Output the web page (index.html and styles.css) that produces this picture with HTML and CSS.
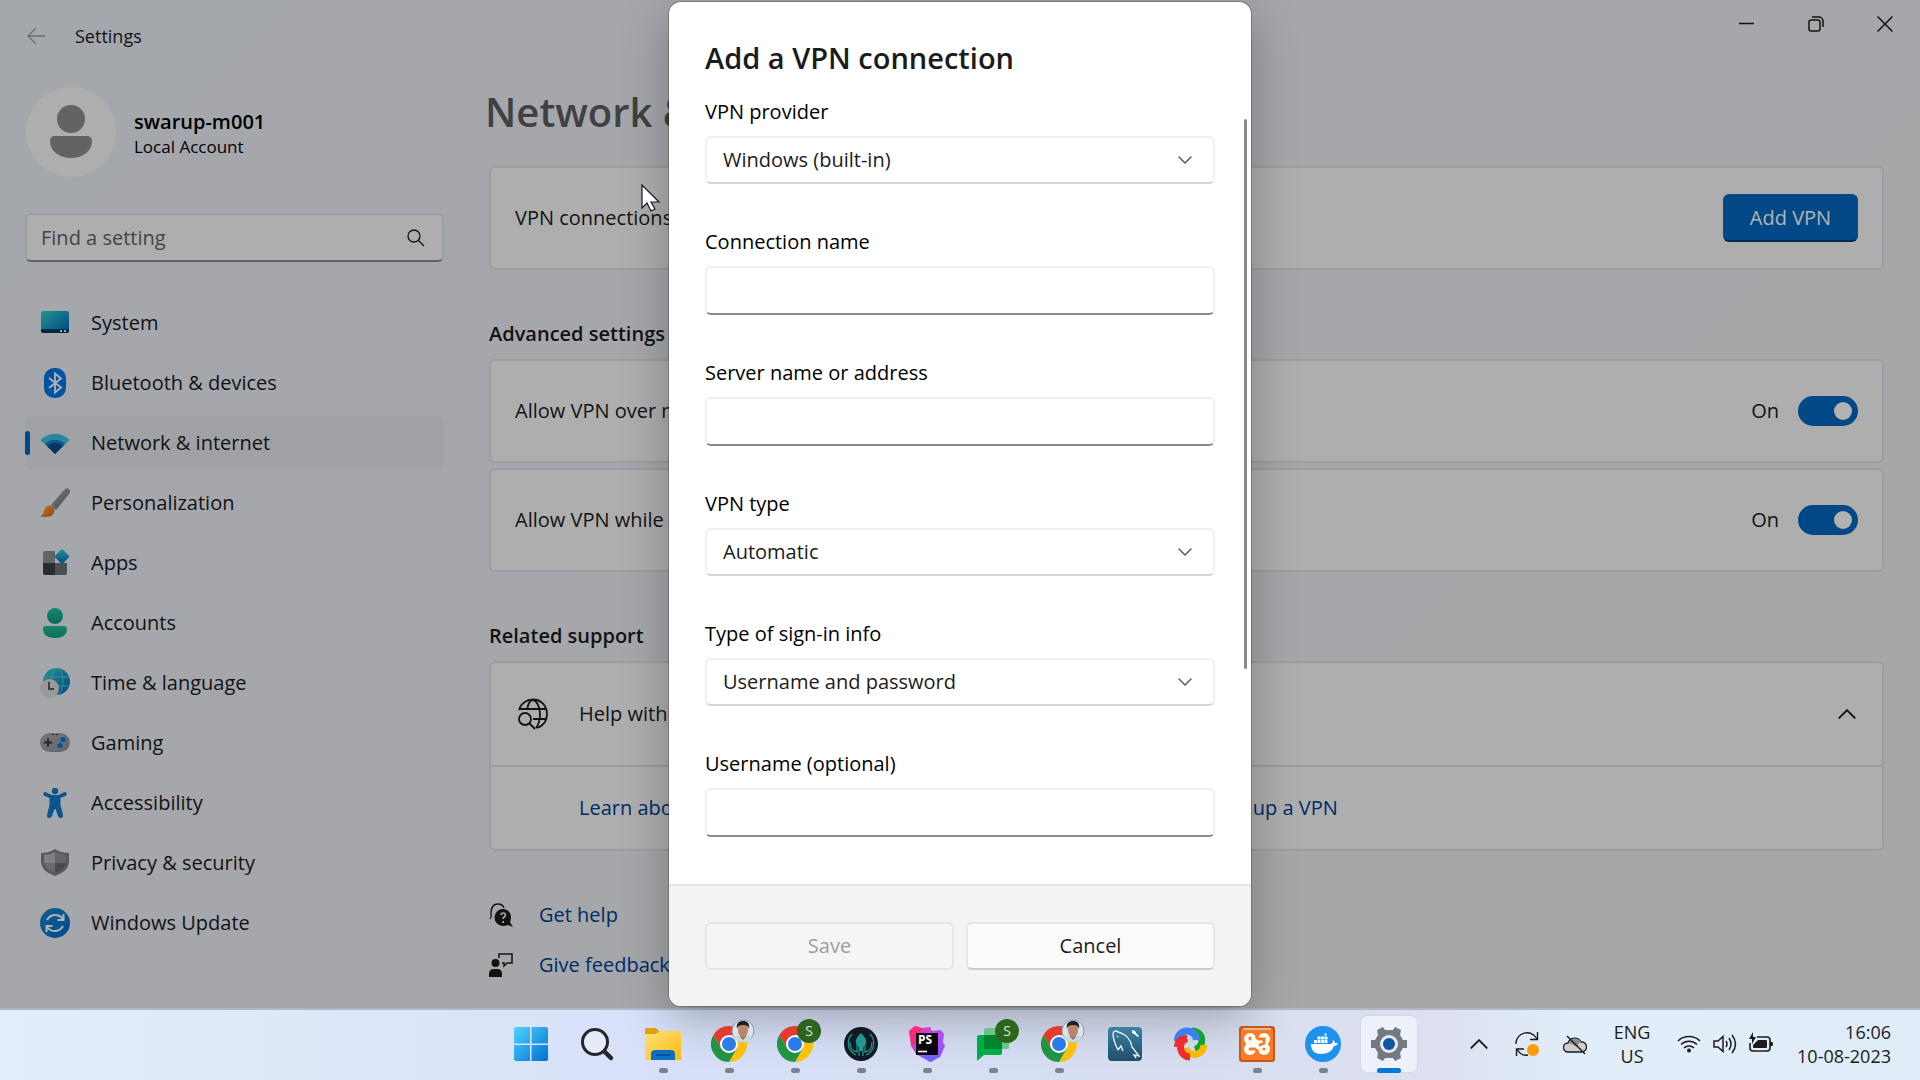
FILE: index.html
```html
<!DOCTYPE html>
<html lang="en">
<head>
  <meta charset="UTF-8" />
  <meta name="viewport" content="width=device-width, initial-scale=1.0"/>
  <title>Settings</title>
  <link rel="stylesheet" href="styles.css">
</head>
<body>
  <!-- Shared gradients and repeated icons -->
  <svg class="defs" width="0" height="0" aria-hidden="true">
    <defs>
      <linearGradient id="gTeal" x1="0" y1="0" x2="1" y2="1"><stop offset="0" stop-color="#35d3d0"/><stop offset="1" stop-color="#0067bd"/></linearGradient>
      <linearGradient id="gGreen" x1="0" y1="0" x2="0" y2="1"><stop offset="0" stop-color="#25c2a0"/><stop offset="1" stop-color="#0f9a7c"/></linearGradient>
      <linearGradient id="gGrey" x1="0" y1="0" x2="1" y2="1"><stop offset="0" stop-color="#b4b8bd"/><stop offset="1" stop-color="#5e646b"/></linearGradient>
      <linearGradient id="gPad" x1="0" y1="0" x2="1" y2="1"><stop offset="0" stop-color="#a6abb0"/><stop offset="1" stop-color="#8d9298"/></linearGradient>
      <linearGradient id="gBlue" x1="0" y1="0" x2="1" y2="1"><stop offset="0" stop-color="#1a8ad0"/><stop offset="1" stop-color="#006acb"/></linearGradient>
      <linearGradient id="gStart" x1="0" y1="0" x2="1" y2="1"><stop offset="0" stop-color="#4fd4ff"/><stop offset="1" stop-color="#006fd0"/></linearGradient>
      <linearGradient id="gFolder" x1="0" y1="0" x2="1" y2="1"><stop offset="0" stop-color="#ffe27a"/><stop offset="1" stop-color="#ffb90f"/></linearGradient>
      <linearGradient id="gOrange" x1="0" y1="0" x2="1" y2="1"><stop offset="0" stop-color="#ffc13b"/><stop offset="1" stop-color="#e0561b"/></linearGradient>
      <linearGradient id="gSql" x1="0" y1="0" x2="0" y2="1"><stop offset="0" stop-color="#3c82a5"/><stop offset="1" stop-color="#1f4d69"/></linearGradient>
      <linearGradient id="gStorm" x1="0" y1="0" x2="1" y2="1"><stop offset="0" stop-color="#ff2d90"/><stop offset="0.5" stop-color="#b74af7"/><stop offset="1" stop-color="#7b5cff"/></linearGradient>
    </defs>
    <symbol id="chrome" viewBox="0 0 36 36">
      <path d="M10.200 22.500 2.400 9a18 18 0 0 1 31.200 0H18z" fill="#e33b2e"/>
      <path d="M18 9h15.600A18 18 0 0 1 18 36l7.800-13.500z" fill="#fdc00f"/>
      <path d="M25.800 22.500 18 36A18 18 0 0 1 2.400 9l7.800 13.500z" fill="#229342"/>
      <circle cx="18" cy="18" r="9" fill="#fff"/>
      <circle cx="18" cy="18" r="7" fill="#2b7bec"/>
    </symbol>
    <symbol id="face" viewBox="0 0 24 24">
      <circle cx="12" cy="12" r="11" fill="#dbe3ec" stroke="#8f99a6" stroke-width="1"/>
      <path d="M4 20c1-4 4-5 8-5s7 1 8 5a11 11 0 0 1-16 0z" fill="#c4dbe4"/>
      <path d="M9 14h6v4l-3 3-3-3z" fill="#a8745c"/>
      <ellipse cx="12" cy="11" rx="5" ry="7" fill="#b9856b"/>
      <path d="M6 10C5 4 8 2 12 2s7 2 6 8c-1-3-2-4-6-4s-5 1-6 4z" fill="#1e1d20"/>
    </symbol>
    <symbol id="chevron" viewBox="0 0 14 14">
      <path d="M1 4l6 6 6-6" fill="none" stroke="currentColor" stroke-width="1.500" stroke-linecap="round" stroke-linejoin="round"/>
    </symbol>
  </svg>

  <div class="desktop">
    <div class="window">
      <!-- Title bar -->
      <header class="titlebar">
        <button class="back" aria-label="Back"><svg width="20" height="18" viewBox="0 0 20 18"><path d="M10 1 2 9l8 8M2 9h17" fill="none" stroke="currentColor" stroke-width="1.300"/></svg></button>
        <span class="app-name">Settings</span>
        <div class="window-buttons">
          <button aria-label="Minimize"><svg width="15" height="15" viewBox="0 0 15 15"><path d="M0 7.500h15" stroke="currentColor" stroke-width="1.500"/></svg></button>
          <button aria-label="Restore"><svg width="16" height="16" viewBox="0 0 16 16" fill="none" stroke="currentColor" stroke-width="1.500"><rect x="1" y="4" width="11" height="11" rx="2"/><path d="M4 1h7a4 4 0 0 1 4 4v6"/></svg></button>
          <button aria-label="Close"><svg width="16" height="16" viewBox="0 0 16 16"><path d="M.5.5l15 15M15.500.5l-15 15" stroke="currentColor" stroke-width="1.500"/></svg></button>
        </div>
      </header>

      <div class="columns">
        <!-- Sidebar -->
        <aside class="sidebar">
          <div class="account">
            <div class="avatar">
              <svg width="90" height="90" viewBox="0 0 90 90" fill="#8e8e8e"><circle cx="45" cy="32" r="14"/><path d="M29 49h32q5 0 5 5c0 10-9 17-21 17S24 64 24 54q0-5 5-5z"/></svg>
            </div>
            <div class="account-text">
              <div class="account-name">swarup-m001</div>
              <div class="account-type">Local Account</div>
            </div>
          </div>

          <div class="search">
            <input type="search" placeholder="Find a setting" aria-label="Find a setting">
            <svg width="18" height="18" viewBox="0 0 18 18" fill="none" stroke="currentColor" stroke-width="1.300"><circle cx="7" cy="7" r="6"/><path d="M11.500 11.500 17 17"/></svg>
          </div>

          <nav class="nav">
            <a href="#system">
              <svg width="30" height="30" viewBox="0 0 30 30"><rect x="1" y="3" width="28" height="22" rx="2" fill="url(#gTeal)"/><path d="M1 21h28v2q0 2-2 2H3q-2 0-2-2z" fill="#0b3c5c"/><path d="M20 22h2v2h-2zM24 22h2v2h-2z" fill="#cfe"/></svg>
              System
            </a>
            <a href="#bluetooth">
              <svg width="30" height="30" viewBox="0 0 30 30"><rect x="4" y="0" width="22" height="30" rx="10" fill="#0078e6"/><path d="M9 10l12 9.500-6 5v-19l6 5L9 20" fill="none" stroke="#fff" stroke-width="1.800"/></svg>
              Bluetooth &amp; devices
            </a>
            <a href="#network" class="selected">
              <svg width="30" height="30" viewBox="0 0 30 30"><path d="M.5 12a20 20 0 0 1 29 0L15 26z" fill="#3cc3e0"/><path d="M5 16a14 14 0 0 1 20 0L15 26z" fill="#1683ce"/><path d="M7 18q8-7 16 0l-8 8z" fill="#0c4d93"/></svg>
              Network &amp; internet
            </a>
            <a href="#personalization">
              <svg width="30" height="30" viewBox="0 0 30 30"><path d="M11 17 24 2q3-3 5-1t0 5L16 22z" fill="url(#gGrey)"/><path d="M0 28c4-1 3-4 5-8 2-3 6-4 8-1 3 3 1 7-2 9-3 1-8 2-11 0z" fill="url(#gOrange)"/></svg>
              Personalization
            </a>
            <a href="#apps">
              <svg width="30" height="30" viewBox="0 0 30 30"><path d="M3 5q0-2 2-2h10v12H3z" fill="#8b9197"/><path d="M3 15h12v12H5q-2 0-2-2z" fill="#3b4045"/><path d="M15 15h12v10q0 2-2 2H15z" fill="#6b7178"/><rect x="16.500" y="3" width="11" height="11" rx="1.500" transform="rotate(45 22 8.500)" fill="url(#gTeal)"/></svg>
              Apps
            </a>
            <a href="#accounts">
              <svg width="30" height="30" viewBox="0 0 30 30" fill="url(#gGreen)"><circle cx="15" cy="8" r="8"/><path d="M6 18h18q3 0 3 3c0 6-5 9-12 9S3 27 3 21q0-3 3-3z"/></svg>
              Accounts
            </a>
            <a href="#time">
              <svg width="30" height="30" viewBox="0 0 30 30"><circle cx="16.500" cy="13.500" r="13.500" fill="url(#gTeal)"/><g fill="none" stroke="#4fd0de" stroke-width="1"><ellipse cx="17" cy="13.500" rx="6" ry="13"/><path d="M4 9h25M8 18h21"/></g><circle cx="9.500" cy="20.500" r="9.500" fill="#dcdcdc"/><path d="M9 14v7h5" fill="none" stroke="#55595e" stroke-width="2"/></svg>
              Time &amp; language
            </a>
            <a href="#gaming">
              <svg width="30" height="30" viewBox="0 0 30 30"><rect x="0" y="5" width="30" height="19" rx="9.500" fill="url(#gPad)"/><path d="M4 14.500h8M8 10.500v8" stroke="#33373b" stroke-width="2"/><circle cx="23" cy="11.500" r="2.500" fill="#0078d9"/><circle cx="20" cy="17.500" r="2.500" fill="#0078d9"/><path d="M12 6.500h2M16 6.500h2" stroke="#33373b"/></svg>
              Gaming
            </a>
            <a href="#accessibility">
              <svg width="30" height="30" viewBox="0 0 30 30" fill="#0f7ac8"><circle cx="15" cy="3" r="3.200"/><path d="M3.500 5q1-1.500 3-.5l5 2.500h7l5-2.500q2-1 3 .5t-1 3l-5 2v7l2.500 10q.3 3-2 3t-3-2L15.500 21h-1L12 28q-.7 2-3 2t-2-3l2.500-10v-7l-5-2q-2-1.500-1-3z"/></svg>
              Accessibility
            </a>
            <a href="#privacy">
              <svg width="30" height="30" viewBox="0 0 30 30"><path d="M15 1q6 4 14 4v8c0 8-6 12-14 15C7 25 1 21 1 13V5q8 0 14-4z" fill="#7d8186"/><path d="M15 4v11H4V7q6 0 11-3z" fill="#b5b8bb"/><path d="M15 4v11h11V7q-6 0-11-3z" fill="#8f9397"/><path d="M4 15h11v10Q5 21 4 15z" fill="#95999d"/><path d="M26 15H15v10q10-4 11-10z" fill="#666b70"/></svg>
              Privacy &amp; security
            </a>
            <a href="#update">
              <svg width="30" height="30" viewBox="0 0 30 30"><circle cx="15" cy="15" r="15" fill="url(#gBlue)"/><path d="M7 12q3-5 8-5 5 0 8 4M23 18q-3 5-8 5-5 0-8-4" fill="none" stroke="#fff" stroke-width="2"/><path d="M23.500 6v6h-6M6.500 24v-6h6" fill="none" stroke="#fff" stroke-width="2"/></svg>
              Windows Update
            </a>
          </nav>
        </aside>

        <!-- Page content -->
        <main class="content">
          <h1>Network &amp; internet &rsaquo; VPN</h1>

          <div class="card row">
            <span>VPN connections</span>
            <button class="primary">Add VPN</button>
          </div>

          <h2>Advanced settings</h2>
          <div class="cards">
            <div class="card row">
              <label for="metered">Allow VPN over metered networks</label>
              <span class="state">On</span>
              <input type="checkbox" class="switch" id="metered" checked>
            </div>
            <div class="card row">
              <label for="roaming">Allow VPN while roaming</label>
              <span class="state">On</span>
              <input type="checkbox" class="switch" id="roaming" checked>
            </div>
          </div>

          <h2>Related support</h2>
          <div class="card">
            <div class="row help">
              <svg width="32" height="32" viewBox="0 0 32 32" fill="none" stroke="currentColor" stroke-width="1.800"><path d="M2 12C4 5 10 1.500 16 1.500c8 0 14 6 14 14.500 0 7-4 12-10 14"/><path d="M10 12c1-6 3-10 6-10s7 6 7 14c0 6-1 10-4 14M3 11h26M16 21h13"/><circle cx="8" cy="21" r="6"/><path d="M12 25l6 6"/></svg>
              <span>Help with VPN</span>
              <button class="expand" aria-label="Collapse"><svg class="up" width="18" height="18"><use href="#chevron"/></svg></button>
            </div>
            <div class="links">
              <a href="#learn">Learn about VPN</a>
              <a href="#setup">Setting up a VPN</a>
            </div>
          </div>

          <div class="feedback">
            <a href="#help">
              <svg width="24" height="24" viewBox="0 0 24 24"><path d="M1 16c2-2 1-3 1-6C2 4 5 1 9 1c3 0 5 1 6 4" fill="none" stroke="#1b1b1b" stroke-width="1.300"/><path d="M14 6a8 8 0 0 1 8 8q0 3-1 5l3 5-5-2q-2 1-5 1a8 8 0 0 1 0-17z" fill="#1b1b1b"/><path d="M12 12q0-2 2.200-2t2.200 2q0 1.500-2.200 3v1M14.200 18v2" fill="none" stroke="#f0f0f0" stroke-width="1.600"/></svg>
              Get help
            </a>
            <a href="#feedback">
              <svg width="24" height="24" viewBox="0 0 24 24"><circle cx="6.500" cy="10" r="4" fill="#1b1b1b"/><path d="M0 24v-3q0-5 5-5h3q5 0 5 5v3z" fill="#1b1b1b"/><path d="M10 5V1h13v9h-5l-3 3v-3h-2" fill="none" stroke="#1b1b1b" stroke-width="1.500"/></svg>
              Give feedback
            </a>
          </div>
        </main>
      </div>

      <!-- VPN dialog -->
      <div class="overlay">
        <form class="dialog" role="dialog" aria-labelledby="dialogTitle">
          <div class="dialog-body">
            <h2 class="dialog-title" id="dialogTitle">Add a VPN connection</h2>
            <div class="fields">
              <div class="field">
                <label for="provider">VPN provider</label>
                <div class="select">
                  <select id="provider"><option>Windows (built-in)</option></select>
                  <svg width="14" height="14"><use href="#chevron"/></svg>
                </div>
              </div>
              <div class="field">
                <label for="connection">Connection name</label>
                <input type="text" id="connection">
              </div>
              <div class="field">
                <label for="server">Server name or address</label>
                <input type="text" id="server">
              </div>
              <div class="field">
                <label for="type">VPN type</label>
                <div class="select">
                  <select id="type"><option>Automatic</option></select>
                  <svg width="14" height="14"><use href="#chevron"/></svg>
                </div>
              </div>
              <div class="field">
                <label for="signin">Type of sign-in info</label>
                <div class="select">
                  <select id="signin"><option>Username and password</option></select>
                  <svg width="14" height="14"><use href="#chevron"/></svg>
                </div>
              </div>
              <div class="field">
                <label for="username">Username (optional)</label>
                <input type="text" id="username">
              </div>
            </div>
            <div class="scroll-thumb"></div>
          </div>
          <div class="dialog-footer">
            <button type="submit" disabled>Save</button>
            <button type="button">Cancel</button>
          </div>
        </form>
      </div>
    </div>

    <!-- Taskbar -->
    <footer class="taskbar">
      <div class="apps">
        <button class="app" aria-label="Start">
          <svg width="36" height="36" viewBox="0 0 36 36" fill="url(#gStart)"><path d="M1 3q0-2 2-2h14v16.500H1zM18.500 1H33q2 0 2 2v14.500H18.500zM1 19h16v16H3q-2 0-2-2zM18.500 19H35v14q0 2-2 2H18.500z"/></svg>
        </button>
        <button class="app" aria-label="Search">
          <svg width="36" height="36" viewBox="0 0 36 36" fill="none" stroke="#26262a"><circle cx="16" cy="16" r="12.500" fill="#e6ebf8" stroke-width="3"/><path d="M25.500 25.500 32 32" stroke-width="4.500" stroke-linecap="round"/></svg>
        </button>
        <button class="app running" aria-label="File Explorer">
          <svg width="36" height="36" viewBox="0 0 36 36"><path d="M0 4q0-2 2-2h9l4 4v4H0z" fill="#e0a008"/><path d="M0 8h11l4-3h19q2 0 2 2v27H0z" fill="url(#gFolder)"/><path d="M6 34V28q0-4 4-4h16q4 0 4 4v6z" fill="#0c6fc0"/><path d="M11 29h14" stroke="#084a86" stroke-width="1.500"/></svg>
        </button>
        <button class="app running" aria-label="Chrome">
          <svg width="36" height="36"><use href="#chrome"/></svg>
          <svg class="badge" width="24" height="24"><use href="#face"/></svg>
        </button>
        <button class="app running" aria-label="Chrome">
          <svg width="36" height="36"><use href="#chrome"/></svg>
          <span class="badge letter">S</span>
        </button>
        <button class="app running" aria-label="GitKraken">
          <svg width="36" height="36" viewBox="0 0 36 36"><circle cx="18" cy="18" r="17" fill="#141824"/><g fill="none" stroke="#1a9a90" stroke-width="1.200"><path d="M9 8a13 13 0 0 0 4 21M27 8a13 13 0 0 1-4 21M7 16q0 9 7 10v-8M29 16q0 9-7 10v-8M16 24v6M20 24v6"/></g><path d="M18 7c4 4 6 7 5 10-1 3-3 2-3 8h-4c0-6-2-5-3-8-1-3 1-6 5-10z" fill="#1a9a90"/></svg>
        </button>
        <button class="app running" aria-label="PhpStorm">
          <svg width="36" height="36" viewBox="0 0 36 36"><path d="M0 5 6 0l7 2 8-1 2 4 9-1 3 4-1 8 2 4-5 11-10 5-14-8-5-8z" fill="url(#gStorm)"/><path d="M0 5 6 0l7 2-5 14-5 5z" fill="#ff2a78"/><path d="M22 30h9l-9 6-11-7z" fill="#6d63ff"/><rect x="7" y="7" width="22" height="22" fill="#0b060e"/><text x="9" y="18" class="logo-text">PS</text><path d="M9 25.500h9" stroke="#fff" stroke-width="1.600"/></svg>
        </button>
        <button class="app running" aria-label="Chat">
          <svg width="36" height="36" viewBox="0 0 36 36"><rect x="9" y="2" width="25" height="21" rx="2" fill="#6bc58a"/><path d="M2 11q0-2 2-2h23v18q0 2-2 2H9l-7 6z" fill="#00ac47"/><path d="M9 9h18v14H11q-2 0-2-2z" fill="#00832d"/></svg>
          <span class="badge letter">S</span>
        </button>
        <button class="app running" aria-label="Chrome">
          <svg width="36" height="36"><use href="#chrome"/></svg>
          <svg class="badge" width="24" height="24"><use href="#face"/></svg>
        </button>
        <button class="app" aria-label="MySQL Workbench">
          <svg width="36" height="36" viewBox="0 0 36 36"><rect x="1" y="1" width="34" height="34" rx="4" fill="url(#gSql)"/><path d="M11 24C8 18 6 12 6 8c0-3 3-4 5-2 8 2 13 8 14 15l7 9-5-1 2 3M11 24l3-4 2 5M10 10l1 1" fill="none" stroke="#e6eff4" stroke-width="1.400"/><path d="M25 4l3 1 1 2 3 3-1 1-4-3-2-1z" fill="#fff"/></svg>
        </button>
        <button class="app" aria-label="ShareX">
          <svg width="36" height="36" viewBox="0 0 36 36" fill="none" stroke-width="7"><path d="M19 4.900A9.500 9.500 0 0 1 22 23.500" stroke="#12a52b"/><path d="M31 19A9.500 9.500 0 0 1 12.500 22" stroke="#fbb705"/><path d="M17 31A9.500 9.500 0 0 1 14 12.500" stroke="#ef2b2b"/><path d="M4.500 15A9.500 9.500 0 0 1 23.500 14" stroke="#3b7ff0"/><path d="M4.500 21Q5 13 14 12.500" stroke="#ef2b2b"/></svg>
        </button>
        <button class="app running" aria-label="XAMPP">
          <svg width="36" height="36" viewBox="0 0 36 36"><rect width="36" height="36" rx="3" fill="#c25a1b"/><rect x="2" y="3" width="32" height="31" rx="2" fill="#fb7a24"/><path d="M4 2h28v2H4z" fill="#f2b48c"/><g fill="#fff"><circle cx="11" cy="13" r="6"/><circle cx="25" cy="13" r="6"/><circle cx="11" cy="23" r="6"/><circle cx="25" cy="23" r="6"/><rect x="8" y="13" width="20" height="10"/></g><g fill="none" stroke="#fb7a24" stroke-width="3" stroke-linecap="round"><path d="M11 12v1M11 23h5M20 13h5v4l-4 2M25 23v0M18 8v4M18 25v4"/></g></svg>
        </button>
        <button class="app running" aria-label="Docker">
          <svg width="36" height="36" viewBox="0 0 36 36"><circle cx="18" cy="18" r="18" fill="#1d91ec"/><path d="M6 18h20q2-1 2-4 2 1 2 3h3q-1 3-4 3-3 8-13 8C9 28 6 24 6 18z" fill="#fff"/><path d="M9 14h3v3H9zM12.500 14h3v3h-3zM16 14h3v3h-3zM19.500 14h3v3h-3zM12.500 10.500h3v3h-3zM16 10.500h3v3h-3zM19.500 10.500h3v3h-3zM19.500 7.500h2v2h-2z" fill="#fff"/></svg>
        </button>
        <button class="app running active" aria-label="Settings">
          <svg width="36" height="36" viewBox="0 0 36 36"><path d="M12 1l2 3h8l2-3 6 3-1 5 3 5h4v8h-4l-3 5 1 5-6 3-2-3h-8l-2 3-6-3 1-5-3-5H0v-8h4l3-5-1-5z" fill="#727b84"/><circle cx="18" cy="18" r="9" fill="#e7eaee"/><circle cx="18" cy="18" r="6" fill="#0c57a4"/></svg>
        </button>
      </div>

      <div class="tray">
        <button aria-label="Show hidden icons"><svg class="up" width="18" height="18"><use href="#chevron"/></svg></button>
        <button aria-label="Update status">
          <svg width="24" height="24" viewBox="0 0 24 24" fill="none" stroke="#1b1b1b" stroke-width="1.400"><path d="M1 12a11 10.500 0 0 1 21-5M22.500 0v7.500H15M13 23C8 24 4 21 2 17M1.500 24v-7H9"/><circle cx="18" cy="18" r="6" fill="#ff9a0a" stroke="none"/></svg>
        </button>
        <button aria-label="OneDrive">
          <svg width="24" height="24" viewBox="0 0 24 24"><path d="M5 20a4.500 4.500 0 0 1 0-9 7 7 0 0 1 13-1 5 5 0 0 1 1 10z" fill="#cfcfd2" stroke="#1b1b1b" stroke-width="1.300"/><path d="M6 11a6.500 6.500 0 0 1 12-1q-3 1-4 5z" fill="#8d8d91"/><path d="M4 4l18 18" stroke="#1b1b1b" stroke-width="1.500"/></svg>
        </button>
        <button class="language"><span>ENG</span><span>US</span></button>
        <button class="status" aria-label="Network, volume and battery">
          <svg width="24" height="24" viewBox="0 0 24 24" fill="none" stroke="#1b1b1b" stroke-width="1.500"><path d="M1 9a16 16 0 0 1 22 0M4 12.500a11.500 11.500 0 0 1 16 0M7 16a7 7 0 0 1 10 0"/><circle cx="12" cy="18.500" r="2" fill="#1b1b1b" stroke="none"/></svg>
          <svg width="24" height="24" viewBox="0 0 24 24" fill="none" stroke="#1b1b1b" stroke-width="1.500"><path d="M1 9h4l5-4.500v15L5 15H1zM13 9q2 3 0 6M16 6q4 6 0 12M19 3q7 9 0 18"/></svg>
          <svg width="24" height="24" viewBox="0 0 24 24"><path d="M8 5h10q3 0 3 3v8q0 3-3 3H4q-3 0-3-3v-5" fill="none" stroke="#1b1b1b" stroke-width="1.600"/><path d="M9 8h8q1 0 1 1v6q0 1-1 1H5q-1 0-1-1v-2z" fill="#1b1b1b"/><path d="M21 10h2q1 0 1 2t-1 2h-2zM4 0v5h3L3 12V7H0z" fill="#1b1b1b"/></svg>
        </button>
        <button class="clock"><span>16:06</span><span>10-08-2023</span></button>
      </div>
    </footer>

    <svg class="cursor" width="20" height="28" viewBox="0 0 20 28"><path d="M1 1v23l5-5 4 8 4-2-4-7h8z" fill="#fff" stroke="#15152a" stroke-width="1.200"/></svg>
  </div>
</body>
</html>
```

FILE: styles.css
```css
* {
  box-sizing: border-box;
}
body {
  margin: 0;
  font-family: "Open Sans", "Noto Sans", sans-serif;
  font-size: 20px;
  line-height: 28px;
  color: #1b1b1b;
}
button,
input,
select {
  font: inherit;
  color: inherit;
}
button {
  padding: 0;
  border: none;
  background: none;
}
svg {
  display: block;
  flex: none;
}
a {
  text-decoration: none;
}
.defs {
  position: absolute;
}
.desktop {
  display: flex;
  flex-direction: column;
  min-height: 100vh;
}
.window {
  position: relative;
  flex: 1;
  background: linear-gradient(135deg, #ebf0f7, #edf0f5 50%, #efeff2);
}

/* title bar */
.titlebar {
  display: flex;
  align-items: center;
  height: 72px;
  padding: 0 1px 0 26px;
}
.back {
  color: #9a9da1;
}
.app-name {
  margin-left: 29px;
  font-size: 18px;
}
.window-buttons {
  display: flex;
  align-self: flex-start;
  margin-left: auto;
}
.window-buttons button {
  display: flex;
  align-items: center;
  justify-content: center;
  width: 69px;
  height: 47px;
}

.columns {
  display: flex;
  padding: 12px 36px 0 25px;
}

/* sidebar */
.sidebar {
  flex: none;
  width: 419px;
  margin-right: 41px;
}
.account {
  display: flex;
  align-items: center;
  gap: 18px;
  padding: 3px 1px 0;
  color: #000;
}
.avatar {
  border-radius: 50%;
  background: #fafafa;
}
.account-text {
  padding-top: 4px;
}
.account-name {
  font-weight: 600;
  line-height: 26px;
}
.account-type {
  font-size: 17px;
  line-height: 24px;
}
.search {
  display: flex;
  align-items: center;
  height: 49px;
  margin: 36px 0 34px;
  padding: 0 17px 0 14px;
  border: 2px solid #dee4e6;
  border-bottom-color: #8a8c8e;
  border-radius: 6px;
  background: #fafafb;
}
.search input {
  flex: 1;
  min-width: 0;
  padding: 0;
  border: none;
  outline: none;
  background: none;
}
.search input::placeholder {
  color: #606264;
}
.nav {
  display: flex;
  flex-direction: column;
  gap: 6px;
}
.nav a {
  display: flex;
  align-items: center;
  gap: 21px;
  height: 54px;
  padding-left: 15px;
  border-radius: 6px;
  color: inherit;
}
.nav .selected {
  padding-left: 0;
  background: #e5e8ec;
}
.nav .selected::before {
  content: "";
  width: 5px;
  height: 24px;
  margin-right: -11px;
  border-radius: 3px;
  background: #0067c0;
}

/* page content */
.content {
  flex: 1;
  min-width: 0;
}
h1 {
  margin: 0 0 26px;
  font-size: 40px;
  font-weight: 600;
  line-height: 56px;
  color: #5e5e5e;
}
.card,
.content h2,
.feedback {
  margin-left: 4px;
}
.content h2 {
  margin-top: 50px;
  margin-bottom: 11px;
  font-size: 20px;
  font-weight: 600;
  line-height: 28px;
}
.card {
  border: 2px solid #dfe3e6;
  border-radius: 6px;
  background: #fafafb;
}
.cards {
  display: flex;
  flex-direction: column;
  gap: 5px;
}
.row {
  display: flex;
  align-items: center;
  min-height: 104px;
  padding: 0 24px;
}
.row button,
.state {
  margin-left: auto;
}
.primary {
  width: 135px;
  height: 48px;
  border: 1px solid #146fc3;
  border-bottom: 2px solid #003e73;
  border-radius: 6px;
  background: #0067c0;
  color: #fff;
}
.switch {
  appearance: none;
  display: flex;
  width: 60px;
  height: 30px;
  margin: 0 0 0 19px;
  padding: 6px;
  border-radius: 15px;
  background: #0067c0;
}
.switch::before {
  content: "";
  width: 18px;
  height: 18px;
  border-radius: 50%;
  background: #fff;
}
.switch:checked::before {
  margin-left: auto;
}
.help {
  gap: 30px;
  padding-left: 26px;
  border-bottom: 2px solid #dfe3e6;
}
.expand {
  margin-right: 2px;
}
.up {
  transform: rotate(180deg);
}
.links {
  display: grid;
  grid-template-columns: 604px 1fr;
  padding: 27px 88px;
}
.links a,
.feedback a {
  color: #003e92;
}
.feedback {
  display: flex;
  flex-direction: column;
  align-items: flex-start;
  gap: 22px;
  margin-top: 50px;
  margin-bottom: 20px;
}
.feedback a {
  display: flex;
  align-items: center;
  gap: 26px;
}

/* dialog */
.overlay {
  position: absolute;
  inset: 0;
  display: flex;
  align-items: center;
  justify-content: center;
  background: rgba(0, 0, 0, 0.3);
}
.dialog {
  width: 582px;
  overflow: hidden;
  border-radius: 12px;
  background: #fff;
  box-shadow: 0 0 0 1px rgba(0, 0, 0, 0.2), 0 12px 48px rgba(0, 0, 0, 0.28);
}
.dialog-body {
  position: relative;
  padding: 34px 36px 47px;
}
.dialog-title {
  margin: 0 0 18px;
  font-size: 29px;
  font-weight: 600;
  line-height: 44px;
}
.fields {
  display: flex;
  flex-direction: column;
  gap: 44px;
  color: #000;
}
.field {
  display: flex;
  flex-direction: column;
  gap: 10px;
}
.field input,
.select select {
  width: 100%;
  border: 2px solid #f0f0f0;
  border-radius: 6px;
  background: #fff;
}
.field input {
  height: 49px;
  padding: 0 16px;
  border-bottom-color: #8a8a8a;
}
.select {
  display: grid;
  align-items: center;
}
.select select,
.select svg {
  grid-area: 1 / 1;
}
.select select {
  appearance: none;
  height: 48px;
  padding: 0 16px;
  border-bottom-color: #d5d5d5;
  color: #1b1b1b;
}
.select svg {
  justify-self: end;
  margin-right: 23px;
  color: #5c5c5c;
  pointer-events: none;
}
.scroll-thumb {
  position: absolute;
  top: 117px;
  right: 4px;
  width: 3px;
  height: 550px;
  border-radius: 2px;
  background: #8a8a8a;
}
.dialog-footer {
  display: grid;
  grid-template-columns: 1fr 1fr;
  gap: 12px;
  padding: 36px;
  border-top: 2px solid #e5e5e5;
  background: #f3f3f3;
}
.dialog-footer button {
  height: 48px;
  border: 2px solid #e5e5e5;
  border-bottom-color: #cccccc;
  border-radius: 6px;
  background: #fbfbfb;
}
.dialog-footer button:disabled {
  border-color: #e5e5e5;
  background: #f5f5f5;
  color: #9d9d9d;
}

/* taskbar */
.taskbar {
  display: grid;
  grid-template-columns: 1fr auto 1fr;
  align-items: center;
  height: 72px;
  padding-bottom: 2px;
  border-top: 2px solid #afb7c4;
  background: linear-gradient(90deg, #e3eefa, #d7e0f8 35%, #d7def2 60%, #dce0f0 75%, #e1edf8 82%, #e0ecf8);
}
.apps {
  display: flex;
  grid-column: 2;
}
.app {
  position: relative;
  display: flex;
  align-items: center;
  justify-content: center;
  width: 56px;
  height: 56px;
  margin: 0 5px;
  border-radius: 6px;
}
.app.running::after {
  content: "";
  position: absolute;
  bottom: -1px;
  left: calc(50% - 4px);
  width: 9px;
  height: 5px;
  border-radius: 3px;
  background: #7b818d;
}
.app.active {
  background: #edf1fb;
  box-shadow: 0 0 0 1px #d3d9e8;
}
.app.active::after {
  left: calc(50% - 12px);
  width: 24px;
  background: #0078d7;
}
.badge {
  position: absolute;
  top: 3px;
  right: 2px;
}
.letter {
  width: 24px;
  height: 24px;
  border-radius: 50%;
  background: #2d641e;
  color: #d7e6d0;
  font-size: 14px;
  line-height: 24px;
}
.logo-text {
  font-size: 12px;
  font-weight: 700;
  fill: #fff;
}
.tray {
  display: flex;
  align-items: center;
  justify-content: flex-end;
  padding-right: 29px;
  font-size: 18px;
  line-height: 24px;
}
.tray button {
  margin-left: 24px;
}
.tray button:first-child {
  margin-right: 3px;
}
.tray .language {
  display: flex;
  flex-direction: column;
  align-items: center;
  width: 48px;
  margin-left: 21px;
}
.tray .status {
  display: flex;
  gap: 12px;
  margin-left: 21px;
}
.tray .clock {
  display: flex;
  flex-direction: column;
  align-items: flex-end;
}

.cursor {
  position: absolute;
  top: 184px;
  left: 641px;
}
```
